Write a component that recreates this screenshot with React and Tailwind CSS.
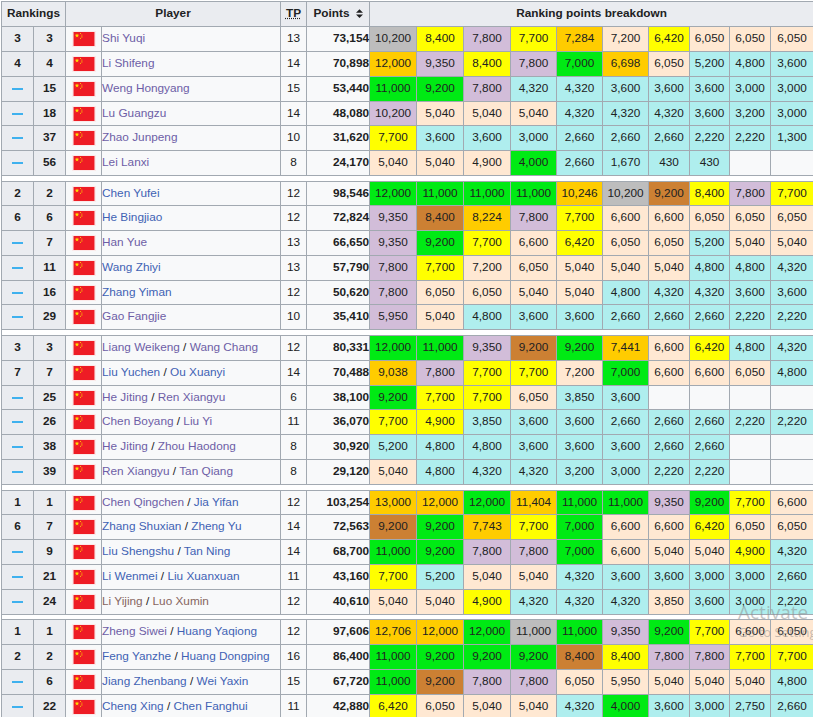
const widths = [32, 32, 36, 179, 26, 63, 47, 47, 47, 46, 46, 46, 41, 40, 41, 43];

const cellColors = {
  S: 'bg-[#bdbdbd]',
  G: 'bg-[#ffcc00]',
  Y: 'bg-[#ffff00]',
  P: 'bg-[#d2bdd9]',
  A: 'bg-[#ffe8d2]',
  T: 'bg-[#afeeee]',
  N: 'bg-[#00ea14]',
  B: 'bg-[#cc8033]',
  W: 'bg-[#f8f9fa]',
};

const nameColors = {
  v: 'text-[#6d5ea6]',
  b: 'text-[#3f62b4]',
  r: 'text-[#86655f]',
};

// short = row is 24px instead of 25px
const groups = [
  {
    gap: 'h-[6px]',
    rows: [
      { a: '3', b: '3', names: [['Shi Yuqi', 'v']], tp: 13, pts: '73,154', cells: 'S10,200 Y8,400 P7,800 Y7,700 G7,284 A7,200 Y6,420 A6,050 A6,050 A6,050' },
      { a: '4', b: '4', names: [['Li Shifeng', 'v']], tp: 14, pts: '70,898', cells: 'G12,000 P9,350 Y8,400 P7,800 N7,000 G6,698 A6,050 T5,200 T4,800 T3,600' },
      { a: '', b: '15', names: [['Weng Hongyang', 'v']], tp: 15, pts: '53,440', cells: 'N11,000 N9,200 P7,800 T4,320 T4,320 T3,600 T3,600 T3,600 T3,000 T3,000' },
      { a: '', b: '18', names: [['Lu Guangzu', 'v']], tp: 14, pts: '48,080', short: true, cells: 'P10,200 A5,040 A5,040 A5,040 T4,320 T4,320 T4,320 T3,600 T3,200 T3,000' },
      { a: '', b: '37', names: [['Zhao Junpeng', 'v']], tp: 10, pts: '31,620', cells: 'Y7,700 T3,600 T3,600 T3,000 T2,660 T2,660 T2,660 T2,220 T2,220 T1,300' },
      { a: '', b: '56', names: [['Lei Lanxi', 'v']], tp: 8, pts: '24,170', cells: 'A5,040 A5,040 A4,900 N4,000 T2,660 T1,670 T430 T430 W W' },
    ],
  },
  {
    gap: 'h-[6px]',
    rows: [
      { a: '2', b: '2', names: [['Chen Yufei', 'b']], tp: 12, pts: '98,546', short: true, cells: 'N12,000 N11,000 N11,000 N11,000 G10,246 S10,200 B9,200 Y8,400 P7,800 Y7,700' },
      { a: '6', b: '6', names: [['He Bingjiao', 'b']], tp: 12, pts: '72,824', cells: 'P9,350 B8,400 G8,224 P7,800 Y7,700 A6,600 A6,600 A6,050 A6,050 A6,050' },
      { a: '', b: '7', names: [['Han Yue', 'v']], tp: 13, pts: '66,650', cells: 'P9,350 N9,200 Y7,700 A6,600 Y6,420 A6,050 A6,050 T5,200 A5,040 A5,040' },
      { a: '', b: '11', names: [['Wang Zhiyi', 'b']], tp: 13, pts: '57,790', cells: 'P7,800 Y7,700 A7,200 A6,050 A5,040 A5,040 A5,040 T4,800 T4,800 T4,320' },
      { a: '', b: '16', names: [['Zhang Yiman', 'b']], tp: 12, pts: '50,620', short: true, cells: 'P7,800 A6,050 A6,050 A5,040 A5,040 T4,800 T4,320 T4,320 T3,600 T3,600' },
      { a: '', b: '29', names: [['Gao Fangjie', 'v']], tp: 10, pts: '35,410', cells: 'P5,950 A5,040 T4,800 T3,600 T3,600 T2,660 T2,660 T2,660 T2,220 T2,220' },
    ],
  },
  {
    gap: 'h-[6px]',
    rows: [
      { a: '3', b: '3', names: [['Liang Weikeng', 'v'], ['Wang Chang', 'v']], tp: 12, pts: '80,331', cells: 'N12,000 N11,000 P9,350 B9,200 N9,200 G7,441 A6,600 Y6,420 T4,800 T4,320' },
      { a: '7', b: '7', names: [['Liu Yuchen', 'b'], ['Ou Xuanyi', 'b']], tp: 14, pts: '70,488', cells: 'G9,038 P7,800 Y7,700 Y7,700 A7,200 N7,000 A6,600 A6,600 A6,050 T4,800' },
      { a: '', b: '25', names: [['He Jiting', 'v'], ['Ren Xiangyu', 'v']], tp: 6, pts: '38,100', short: true, cells: 'N9,200 Y7,700 Y7,700 A6,050 T3,850 T3,600 W W W W' },
      { a: '', b: '26', names: [['Chen Boyang', 'v'], ['Liu Yi', 'v']], tp: 11, pts: '36,070', cells: 'Y7,700 Y4,900 T3,850 T3,600 T3,600 T2,660 T2,660 T2,660 T2,220 T2,220' },
      { a: '', b: '38', names: [['He Jiting', 'v'], ['Zhou Haodong', 'v']], tp: 8, pts: '30,920', cells: 'T5,200 T4,800 T4,800 T3,600 T3,600 T3,600 T2,660 T2,660 W W' },
      { a: '', b: '39', names: [['Ren Xiangyu', 'v'], ['Tan Qiang', 'v']], tp: 8, pts: '29,120', cells: 'A5,040 T4,800 T4,320 T4,320 T3,200 T3,000 T2,220 T2,220 W W' },
    ],
  },
  {
    gap: 'h-[5px]',
    rows: [
      { a: '1', b: '1', names: [['Chen Qingchen', 'v'], ['Jia Yifan', 'b']], tp: 12, pts: '103,254', short: true, cells: 'G13,000 G12,000 N12,000 G11,404 N11,000 N11,000 P9,350 N9,200 Y7,700 A6,600' },
      { a: '6', b: '7', names: [['Zhang Shuxian', 'b'], ['Zheng Yu', 'b']], tp: 14, pts: '72,563', cells: 'B9,200 N9,200 G7,743 Y7,700 N7,000 A6,600 A6,600 Y6,420 A6,050 A6,050' },
      { a: '', b: '9', names: [['Liu Shengshu', 'b'], ['Tan Ning', 'b']], tp: 14, pts: '68,700', cells: 'N11,000 N9,200 P7,800 P7,800 N7,000 A6,600 A5,040 A5,040 Y4,900 T4,320' },
      { a: '', b: '21', names: [['Li Wenmei', 'b'], ['Liu Xuanxuan', 'b']], tp: 11, pts: '43,160', cells: 'Y7,700 T5,200 A5,040 A5,040 T4,320 T3,600 T3,600 T3,000 T3,000 T2,660' },
      { a: '', b: '24', names: [['Li Yijing', 'r'], ['Luo Xumin', 'r']], tp: 12, pts: '40,610', cells: 'A5,040 A5,040 Y4,900 T4,320 T4,320 T4,320 A3,850 T3,600 T3,000 T2,220' },
    ],
  },
  {
    rows: [
      { a: '1', b: '1', names: [['Zheng Siwei', 'v'], ['Huang Yaqiong', 'b']], tp: 12, pts: '97,606', cells: 'G12,706 G12,000 N12,000 S11,000 N11,000 P9,350 N9,200 Y7,700 A6,600 A6,050' },
      { a: '2', b: '2', names: [['Feng Yanzhe', 'b'], ['Huang Dongping', 'b']], tp: 16, pts: '86,400', cells: 'N11,000 N9,200 N9,200 N9,200 B8,400 Y8,400 P7,800 P7,800 Y7,700 Y7,700' },
      { a: '', b: '6', names: [['Jiang Zhenbang', 'b'], ['Wei Yaxin', 'b']], tp: 15, pts: '67,720', cells: 'N11,000 B9,200 P7,800 P7,800 A6,050 A5,950 A5,040 A5,040 A5,040 T4,800' },
      { a: '', b: '22', names: [['Cheng Xing', 'b'], ['Chen Fanghui', 'b']], tp: 11, pts: '42,880', cells: 'Y6,420 A6,050 A5,040 A5,040 T4,320 N4,000 T3,600 T3,000 T2,750 T2,660' },
    ],
  },
];

function Flag() {
  return (
    <svg viewBox="0 0 30 20" className="mx-auto block h-[16px] w-[24px] border border-[#fbe9e9]">
      <rect width="30" height="20" fill="#ee1c25" />
      <polygon points="5,2 5.9,4.1 8,4.1 6.4,5.6 7,8 5,6.6 3,8 3.6,5.6 2,4.1 4.1,4.1" fill="#ffde00" />
      <circle cx="10" cy="2.2" r="0.8" fill="#ffde00" />
      <circle cx="12" cy="4.2" r="0.8" fill="#ffde00" />
      <circle cx="12" cy="7" r="0.8" fill="#ffde00" />
      <circle cx="10" cy="9" r="0.8" fill="#ffde00" />
    </svg>
  );
}

function SortIcon() {
  return (
    <svg viewBox="0 0 8 10" className="ml-[6px] inline-block h-[9px] w-[7px] align-[-0.5px]">
      <polygon points="4,0 8,4 0,4" fill="#202122" />
      <polygon points="0,6 8,6 4,10" fill="#202122" />
    </svg>
  );
}

function Row({ row }) {
  const cells = row.cells.split(' ');
  return (
    <tr className={row.short ? 'h-[24px]' : 'h-[25px]'}>
      <td className="bg-[#eaecf0] text-center font-bold">
        {row.a ? row.a : <span className="mx-auto block h-[2px] w-[11px] bg-[#3fb1ee]" />}
      </td>
      <td className="bg-[#eaecf0] text-center font-bold">{row.b}</td>
      <td className="bg-[#f8f9fa]">
        <Flag />
      </td>
      <td className="whitespace-nowrap bg-[#f8f9fa] pl-[5px]">
        {row.names.map((n, i) => (
          <span key={i}>
            {i > 0 && ' / '}
            <a className={nameColors[n[1]]}>{n[0]}</a>
          </span>
        ))}
      </td>
      <td className="bg-[#f8f9fa] text-center">{row.tp}</td>
      <td className="bg-[#f8f9fa] pr-[4px] text-right font-bold">{row.pts}</td>
      {cells.map((c, i) => (
        <td key={i} className={`text-center ${cellColors[c[0]]}`}>
          {c.slice(1)}
        </td>
      ))}
    </tr>
  );
}

export default function App() {
  return (
    <div className="relative h-[717px] w-[813px] overflow-hidden bg-white pl-px pt-px font-['Liberation_Sans',Arial,sans-serif] text-[11.8px] text-[#202122]">
      <table className="w-[812px] table-fixed border-collapse [&_td]:border [&_td]:border-[#a2a9b1] [&_td]:p-0 [&_th]:border [&_th]:border-[#a2a9b1] [&_th]:p-0">
        <colgroup>
          {widths.map((w, i) => (
            <col key={i} style={{ width: w }} />
          ))}
        </colgroup>
        <thead>
          <tr className="h-[25px] bg-[#eaecf0] font-bold">
            <th colSpan={2}>Rankings</th>
            <th colSpan={2}>Player</th>
            <th>
              <abbr className="underline decoration-dotted">TP</abbr>
            </th>
            <th className="whitespace-nowrap">
              Points
              <SortIcon />
            </th>
            <th colSpan={10}>Ranking points breakdown</th>
          </tr>
        </thead>
        {groups.map((g, i) => (
          <tbody key={i}>
            {g.rows.map((row, j) => (
              <Row key={j} row={row} />
            ))}
            {g.gap && (
              <tr className={g.gap}>
                <td colSpan={16} className="bg-white" />
              </tr>
            )}
          </tbody>
        ))}
      </table>

      {/* windows watermark */}
      <div className="pointer-events-none absolute left-[738px] top-[600px] whitespace-nowrap font-['Open_Sans',sans-serif] text-[#8a8a8a]/50">
        <div className="text-[19px] leading-[24px]">Activate</div>
        <div className="text-[13px] leading-[16px]">Go to Settings</div>
      </div>
    </div>
  );
}
